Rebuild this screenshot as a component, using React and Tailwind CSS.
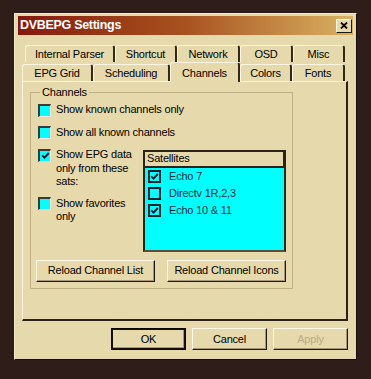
import React from "react";

const Check = ({ color = "#0d1b2a" }) => (
  <svg width="9" height="9" viewBox="0 0 9 9">
    <path d="M1.2 4.3 L3.5 6.6 L7.8 2" stroke={color} strokeWidth="1.9" fill="none" />
  </svg>
);

// sunken 3D checkbox used in the group box
function Box({ checked }) {
  return (
    <span className="w-[13px] h-[13px] shrink-0 bg-[#00ffff] border-t-2 border-l-2 border-r border-b border-t-[#3b3a36] border-l-[#3b3a36] border-r-[#f4f0e0] border-b-[#f4f0e0] flex items-center justify-center">
      {checked && <Check />}
    </span>
  );
}

function Option({ checked, children }) {
  return (
    <div className="flex items-start gap-[5px] ml-[2px]">
      <div className="pt-[0.5px]">
        <Box checked={checked} />
      </div>
      <div className="leading-[13.5px]">{children}</div>
    </div>
  );
}

function Tab({ w, children }) {
  return (
    <div
      className={`${w} h-[17px] shrink-0 flex items-center justify-center border-t border-l border-[#fbf6e2] border-r-2 border-r-[#33271a] rounded-t-[3px]`}
    >
      {children}
    </div>
  );
}

function Button({ w, children, isDefault, disabled }) {
  return (
    <div
      className={`${w} h-[22px] flex items-center justify-center bg-[#e6d9ac] ${
        isDefault ? "outline outline-1 outline-[#0b0906] -outline-offset-1 border-2 border-t-[#15110a] border-l-[#15110a] border-r-[#15110a] border-b-[#15110a]" : "border border-t-[#fdf9e8] border-l-[#fdf9e8] border-r-[#1b160e] border-b-[#1b160e]"
      } shadow-[inset_-1px_-1px_0_#a89a70] ${disabled ? "text-[#b9ac82]" : "text-black"}`}
    >
      {children}
    </div>
  );
}

const sats = [
  { name: "Echo 7", on: true },
  { name: "Directv 1R,2,3", on: false },
  { name: "Echo 10 & 11", on: true },
];

export default function App() {
  return (
    <div className="w-[371px] h-[379px] bg-[#2e1d18] pt-[13px] pl-[14px] font-['Liberation_Sans',Arial,sans-serif] text-[11px] tracking-[-0.2px] text-black">
      <div className="w-[343px] h-[347px] bg-[#e6d9ac] border border-t-[#f1e9c9] border-l-[#f1e9c9] border-r-[#120c08] border-b-[#120c08] flex flex-col">
        {/* title bar */}
        <div className="mt-[2px] ml-[3px] mr-[3px] h-[19px] bg-linear-to-r from-[#86170d] via-[#a8521f] to-[#d8b262] flex items-center justify-between pl-[2px] pr-[1px]">
          <span className="text-white font-bold text-[12.5px] tracking-[-0.3px]">DVBEPG Settings</span>
          <div className="w-[16px] h-[14px] bg-[#e6d9ac] border border-t-[#fdf9e8] border-l-[#fdf9e8] border-r-[#1b160e] border-b-[#1b160e] flex items-center justify-center">
            <svg width="8" height="7" viewBox="0 0 8 7">
              <path d="M1 0.5 L7 6.5 M7 0.5 L1 6.5" stroke="#000" strokeWidth="1.8" />
            </svg>
          </div>
        </div>

        {/* tabs */}
        <div className="mt-[10px] ml-[10px] flex">
          <Tab w="w-[90px]">Internal Parser</Tab>
          <Tab w="w-[62px]">Shortcut</Tab>
          <Tab w="w-[63px]">Network</Tab>
          <Tab w="w-[53px]">OSD</Tab>
          <Tab w="w-[52px]">Misc</Tab>
        </div>
        <div className="ml-[7px] h-[19px] flex items-end">
          <Tab w="w-[71px]">EPG Grid</Tab>
          <Tab w="w-[77px]">Scheduling</Tab>
          <div className="relative z-10 w-[70px] h-[20px] -mb-[1px] shrink-0 flex items-start pt-[2px] justify-center bg-[#e6d9ac] border-t border-l border-[#fbf6e2] border-r-2 border-r-[#33271a] rounded-t-[3px]">
            Channels
          </div>
          <Tab w="w-[52px]">Colors</Tab>
          <Tab w="w-[53px]">Fonts</Tab>
        </div>

        {/* panel */}
        <div className="ml-[7px] w-[326px] h-[240px] border-t border-l border-t-[#fbf6e2] border-l-[#fbf6e2] border-r-2 border-b-2 border-r-[#2b2116] border-b-[#2b2116] pl-[7px] pt-[4px]">
          <fieldset className="w-[263px] border border-[#bfb085] px-[5px] pb-[6px]">
            <legend className="ml-[4px] px-[2px] leading-[13px]">Channels</legend>
            <div className="pt-[4px] flex flex-col">
              <Option checked={false}>Show known channels only</Option>
              <div className="mt-[9px]">
                <Option checked={false}>Show all known channels</Option>
              </div>
              <div className="mt-[9px] flex">
                <div className="w-[100px] flex flex-col">
                  <Option checked>
                    Show EPG data
                    <br />
                    only from these
                    <br />
                    sats:
                  </Option>
                  <div className="mt-[8px]">
                    <Option checked={false}>
                      Show favorites
                      <br />
                      only
                    </Option>
                  </div>
                </div>
                <div className="ml-[7px] mt-[1.5px] w-[143px] h-[102px] border-2 border-[#2a2418] border-b-[#5a5038] flex flex-col bg-[#00ffff]">
                  <div className="h-[16px] bg-[#e6d9ac] border-b-2 border-b-[#2a2418] border-r border-r-[#2a2418] flex items-center pl-[2px]">
                    Satellites
                  </div>
                  {sats.map((s) => (
                    <div key={s.name} className="h-[17px] flex items-center pl-[3px] gap-[8px] text-[#1a2a3c]">
                      <span className="w-[13px] h-[13px] border-2 border-[#10202c] flex items-center justify-center">
                        {s.on && <Check />}
                      </span>
                      <span>{s.name}</span>
                    </div>
                  ))}
                </div>
              </div>
              <div className="mt-[8px] flex gap-[12px]">
                <Button w="w-[119px]">Reload Channel List</Button>
                <Button w="w-[119px]">Reload Channel Icons</Button>
              </div>
            </div>
          </fieldset>
        </div>

        {/* dialog buttons */}
        <div className="mt-[7px] mr-[8px] flex justify-end gap-[6px]">
          <Button w="w-[75px]" isDefault>OK</Button>
          <Button w="w-[75px]">Cancel</Button>
          <Button w="w-[75px]" disabled>Apply</Button>
        </div>
      </div>
    </div>
  );
}
